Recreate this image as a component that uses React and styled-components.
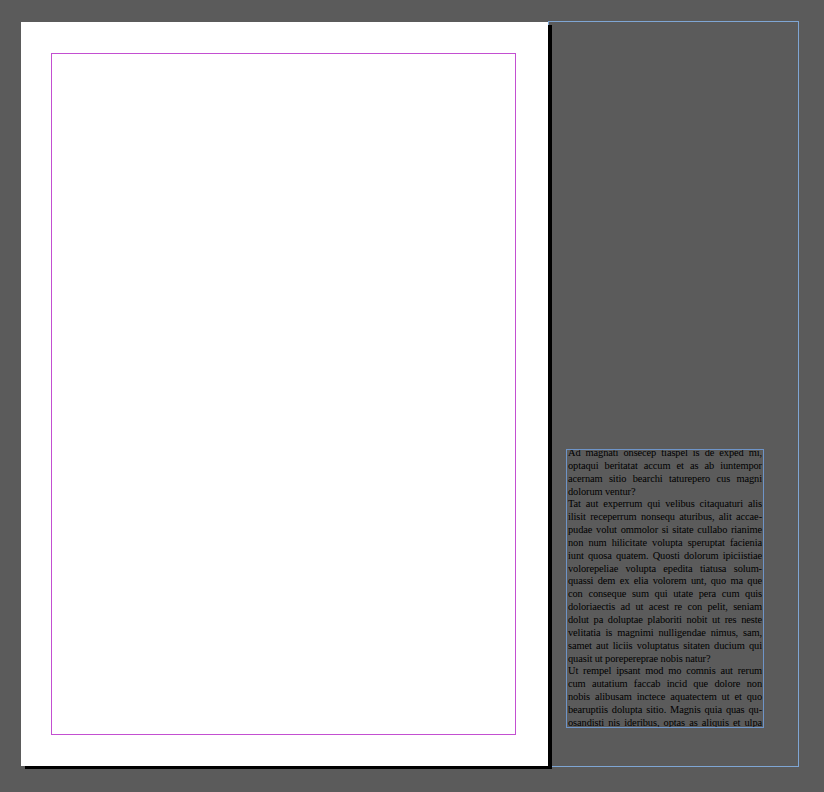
import React from "react";
import styled, { createGlobalStyle } from "styled-components";

const G = createGlobalStyle`
  html, body { margin: 0; background: #5b5b5b; }
  body { width: 824px; height: 792px; overflow: hidden; }
`;
const Canvas = styled.div`
  display: flex; align-items: flex-start; padding: 21px 0 0 21px;
`;
const Page = styled.div`
  width: 527px; height: 744px; margin-top: 1px; background: #fff;
  box-shadow: 4px 3px 0 #000; box-sizing: border-box;
  padding: 31px 0 0 30px; position: relative; z-index: 1;
`;
const Margins = styled.div`
  width: 465px; height: 682px; box-sizing: border-box; border: 1px solid #c34fd1;
`;
const Spread = styled.div`
  width: 251px; height: 746px; box-sizing: border-box; border: 1px solid #7fa6d4;
  padding: 427px 0 0 17px;
`;
const Frame = styled.div`
  width: 198px; height: 279px; box-sizing: border-box; border: 1px solid #6e94c8;
  padding: 0 1px 0 1px; font-family: "Liberation Serif", serif;
  font-size: 10.4px; line-height: 12.85px; color: #000; letter-spacing: -0.1px;
  overflow: hidden;
`;
const Line = styled.div`
  white-space: nowrap; text-align: justify; text-align-last: ${p => p.$last ? "left" : "justify"};
  height: 12.85px; margin-top: ${p => p.$first ? "-3px" : "0"};
`;

const lines = [
  ["Ad magnati onsecep tiaspel is de exped mi,"],
  ["optaqui beritatat accum et as ab iuntempor"],
  ["acernam sitio bearchi taturepero cus magni"],
  ["dolorum ventur?", 1],
  ["Tat aut experrum qui velibus citaquaturi alis"],
  ["ilisit receperrum nonsequ aturibus, alit accae-"],
  ["pudae volut ommolor si sitate cullabo rianime"],
  ["non num hilicitate volupta speruptat facienia"],
  ["iunt quosa quatem. Quosti dolorum ipiciistiae"],
  ["volorepeliae volupta epedita tiatusa solum-"],
  ["quassi dem ex elia volorem unt, quo ma que"],
  ["con conseque sum qui utate pera cum quis"],
  ["doloriaectis ad ut acest re con pelit, seniam"],
  ["dolut pa doluptae plaboriti nobit ut res neste"],
  ["velitatia is magnimi nulligendae nimus, sam,"],
  ["samet aut liciis voluptatus sitaten ducium qui"],
  ["quasit ut porepereprae nobis natur?", 1],
  ["Ut rempel ipsant mod mo comnis aut rerum"],
  ["cum autatium faccab incid que dolore non"],
  ["nobis alibusam inctece aquatectem ut et quo"],
  ["bearuptiis dolupta sitio. Magnis quia quas qu-"],
  ["osandisti nis ideribus, optas as aliquis et ulpa"],
];

export default function App() {
  return (
    <>
      <G />
      <Canvas>
        <Page><Margins /></Page>
        <Spread>
          <Frame>
            {lines.map(([t, l], i) => (
              <Line key={i} $last={!!l} $first={i === 0}>{t}</Line>
            ))}
          </Frame>
        </Spread>
      </Canvas>
    </>
  );
}
